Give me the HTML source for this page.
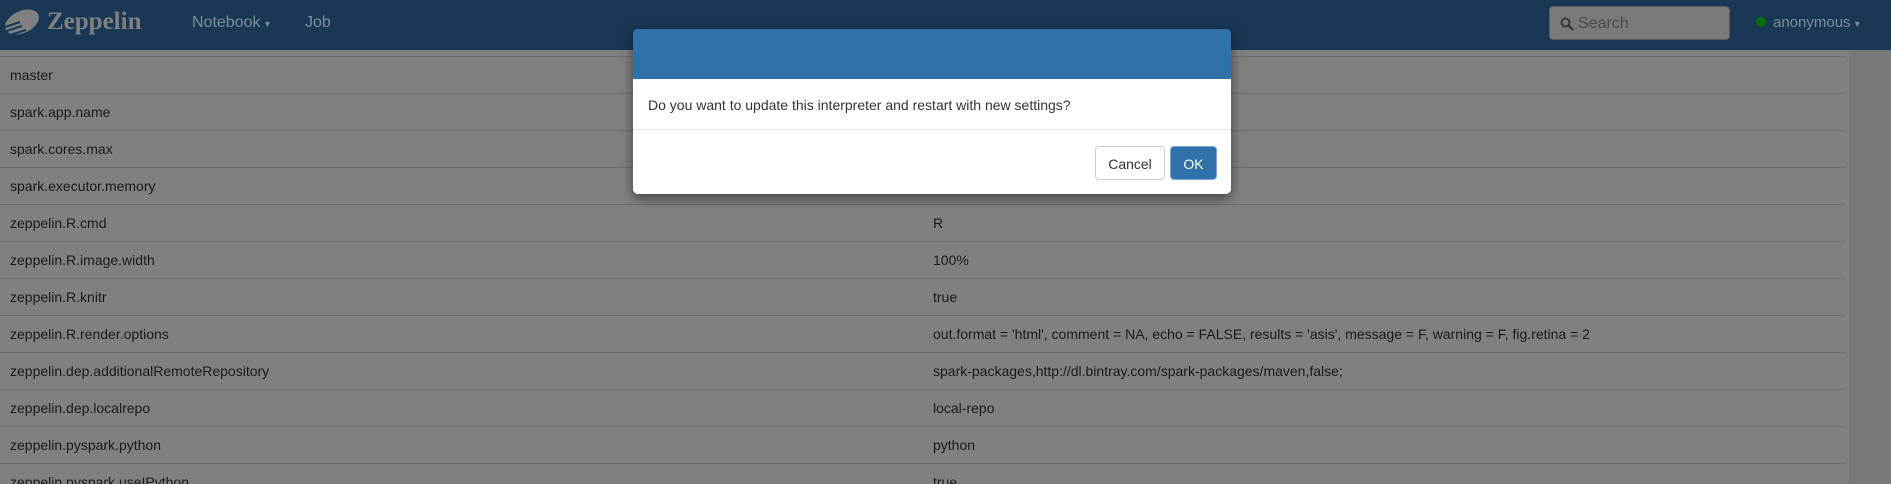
<!DOCTYPE html>
<html style="overflow:hidden;width:1891px;height:484px"><head><meta charset="utf-8"><style>
*{margin:0;padding:0;box-sizing:border-box}
body{width:1891px;height:484px;overflow:hidden;background:#808080;font-family:"Liberation Sans",sans-serif;position:relative}
.nav{position:absolute;left:0;top:0;width:1891px;height:50px;background:#183855}
.logo{position:absolute;left:47px;top:8px;font-family:"Liberation Serif",serif;font-weight:bold;font-size:25px;color:#808080}
.nl{position:absolute;top:14px;font-size:16px;color:#7f8c99}
.search{position:absolute;left:1549px;top:6px;width:181px;height:34px;border:1px solid #5a5a5a;border-radius:4px;background:#7a7a7a;color:#4a4a4a;font-size:16px;padding:8px 0 0 28px}
.dot{position:absolute;left:1756px;top:17px;width:10px;height:10px;border-radius:50%;background:#0a6e0a}
.tbl{position:absolute;left:0;top:56px;width:1846px;height:428px;overflow:hidden}
.row{height:37px;border-top:1px solid #6e6e6e;font-size:14px;color:#1a1a1a;position:relative}
.row span{position:absolute;top:10px}
.a{left:10px}.b{left:933px}
.sb{position:absolute;left:1849px;top:50px;width:42px;height:434px;background:#787878}
.modal{position:absolute;left:633px;top:29px;width:598px;height:165px;background:#fff;border-radius:5px;overflow:hidden;box-shadow:0 4px 12px rgba(0,0,0,.5)}
.mh{height:50px;background:#3071a9}
.mb{height:51px;border-bottom:1px solid #e5e5e5;font-size:14px;color:#333;padding:18px 0 0 15px}
.btn{position:absolute;top:117px;height:34px;border-radius:4px;font-size:14px;text-align:center;padding-top:9px}
</style></head><body>
<div class="nav">
<svg style="position:absolute;left:0;top:8px" width="42" height="32" viewBox="0 0 42 32"><ellipse cx="22" cy="14" rx="18" ry="11" transform="rotate(-25 22 14)" fill="#808080"/><path d="M2 20 L20 14 M0 25 L22 18 M4 29 L26 22" stroke="#183855" stroke-width="2"/></svg>
<div class="logo">Zeppelin</div>
<div class="nl" style="left:192px">Notebook <span style="font-size:10px">▾</span></div>
<div class="nl" style="left:305px">Job</div>
<div class="search"><svg style="position:absolute;left:10px;top:10px" width="14" height="14" viewBox="0 0 14 14"><circle cx="5.5" cy="5.5" r="4" stroke="#3a3a3a" stroke-width="2" fill="none"/><path d="M8.5 8.5 L13 13" stroke="#3a3a3a" stroke-width="2.5"/></svg>Search</div>
<div class="dot"></div>
<div class="nl" style="left:1773px;font-size:15px;top:14px">anonymous <span style="font-size:10px">▾</span></div>
</div>
<div class="tbl">
<div class="row"><span class="a">master</span></div>
<div class="row"><span class="a">spark.app.name</span></div>
<div class="row"><span class="a">spark.cores.max</span></div>
<div class="row"><span class="a">spark.executor.memory</span></div>
<div class="row"><span class="a">zeppelin.R.cmd</span><span class="b">R</span></div>
<div class="row"><span class="a">zeppelin.R.image.width</span><span class="b">100%</span></div>
<div class="row"><span class="a">zeppelin.R.knitr</span><span class="b">true</span></div>
<div class="row"><span class="a">zeppelin.R.render.options</span><span class="b">out.format = 'html', comment = NA, echo = FALSE, results = 'asis', message = F, warning = F, fig.retina = 2</span></div>
<div class="row"><span class="a">zeppelin.dep.additionalRemoteRepository</span><span class="b">spark-packages,http://dl.bintray.com/spark-packages/maven,false;</span></div>
<div class="row"><span class="a">zeppelin.dep.localrepo</span><span class="b">local-repo</span></div>
<div class="row"><span class="a">zeppelin.pyspark.python</span><span class="b">python</span></div>
<div class="row"><span class="a">zeppelin.pyspark.useIPython</span><span class="b">true</span></div>
</div>
<div class="sb"></div>
<div class="modal">
<div class="mh"></div>
<div class="mb">Do you want to update this interpreter and restart with new settings?</div>
<div class="btn" style="left:462px;width:70px;border:1px solid #ccc;color:#333;background:#fff">Cancel</div>
<div class="btn" style="left:537px;width:47px;border:1px solid #7aa7d8;color:#fff;background:#3071a9">OK</div>
</div>
</body></html>
